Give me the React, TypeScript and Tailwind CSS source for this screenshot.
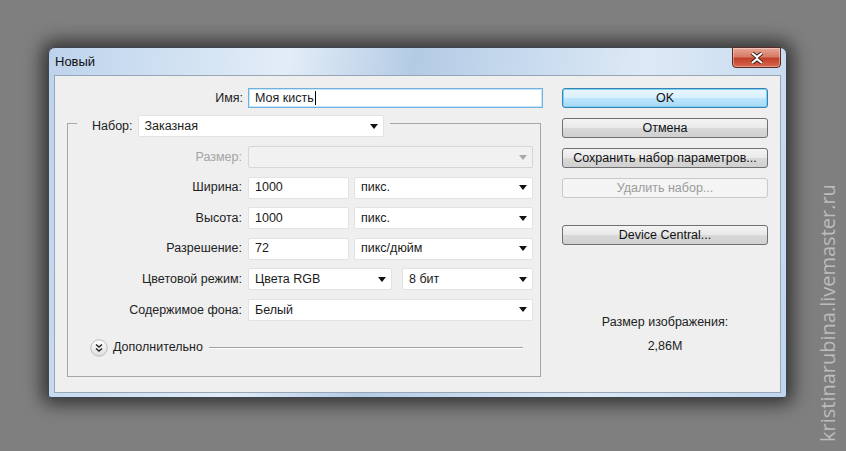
import React from "react";

const font = "font-['Liberation_Sans',Arial,sans-serif]";

function Arrow({ disabled = false }: { disabled?: boolean }) {
  return (
    <svg width="8" height="5" viewBox="0 0 8 5" className="shrink-0">
      <path d="M0 0H8L4 5Z" fill={disabled ? "#a8a8a8" : "#111"} />
    </svg>
  );
}

function Field({ value, w }: { value: string; w: string }) {
  return (
    <div
      className={`${w} flex h-[22px] items-center rounded-[2px] border border-[#e2e2e2] bg-white pl-[6px] text-[#1a1a1a]`}
    >
      {value}
    </div>
  );
}

function Select({
  value,
  w,
  disabled = false,
}: {
  value: string;
  w: string;
  disabled?: boolean;
}) {
  return (
    <div
      className={`${w} flex h-[22px] items-center justify-between rounded-[2px] border pl-[6px] pr-[5px] ${
        disabled
          ? "border-[#d6d6d6] bg-[#f1f1f1]"
          : "border-[#e2e2e2] bg-white text-[#1a1a1a]"
      }`}
    >
      <span>{value}</span>
      <Arrow disabled={disabled} />
    </div>
  );
}

function Row({
  label,
  children,
  muted = false,
  gap = "gap-[5px]",
}: {
  label: string;
  children: React.ReactNode;
  muted?: boolean;
  gap?: string;
}) {
  return (
    <div className="flex h-[22px] items-center">
      <div
        className={`w-[175px] pr-[1px] text-right ${
          muted ? "text-[#a3a3a3]" : "text-[#222]"
        }`}
      >
        {label}
      </div>
      <div className={`ml-[5px] flex ${gap}`}>{children}</div>
    </div>
  );
}

function Button({
  children,
  kind = "normal",
}: {
  children: React.ReactNode;
  kind?: "normal" | "default" | "disabled";
}) {
  const styles = {
    normal:
      "border-[#707070] bg-[linear-gradient(#f3f3f3_0%,#e9e9e9_50%,#d9d9d9_51%,#d0d0d0_100%)] text-[#111]",
    default:
      "border-[#3c7fb1] bg-[linear-gradient(#eaf6fd_0%,#d9f0fc_50%,#bee6fd_51%,#a7d9f5_100%)] text-[#111] shadow-[inset_0_0_0_1px_#7ad2f7]",
    disabled: "border-[#c9c9c9] bg-[#f4f4f4] text-[#9b9b9b]",
  }[kind];
  return (
    <div
      className={`flex h-[20px] w-[206px] items-center justify-center rounded-[3px] border ${styles}`}
    >
      {children}
    </div>
  );
}

export default function App() {
  return (
    <div
      className={`relative h-[451px] w-[846px] overflow-hidden bg-[#7f7f7f] pl-[48px] pt-[47px] text-[12.5px] ${font}`}
    >
      <div className="relative flex h-[351px] w-[739px] flex-col rounded-t-[7px] rounded-b-[3px] border border-[#3f4650] bg-[linear-gradient(100deg,#bdd3ec_0%,#d8e6f4_22%,#e3edf7_30%,#b4cbe5_46%,#cadcef_62%,#dde9f5_75%,#c0d6ee_100%)] shadow-[0_0_18px_6px_rgba(0,0,0,0.6)]">
        <div className="flex h-[27px] items-center pl-[6px] text-[13px] text-[#111]">
          Новый
        </div>
        <div className="absolute -top-[1px] right-[5px] flex h-[21px] w-[49px] items-center justify-center rounded-b-[4px] border border-[#5a2b24] bg-[linear-gradient(#e8a797_0%,#d77c67_45%,#c2402a_55%,#d8684f_100%)] shadow-[inset_0_0_0_1px_rgba(255,255,255,0.35)]">
          <svg width="14" height="12" viewBox="0 0 14 12">
            <path
              d="M2 1L7 5L12 1M2 11L7 7L12 11"
              stroke="#3a1a14"
              strokeWidth="4"
              fill="none"
            />
            <path
              d="M2 1L7 5L12 1M2 11L7 7L12 11"
              stroke="#fff"
              strokeWidth="2.2"
              fill="none"
            />
          </svg>
        </div>

        <div className="mx-[5px] mb-[4px] flex flex-1 border border-[#97a6b6] bg-[#efefef] pl-[12px] pt-[12px]">
          <div className="flex w-[476px] flex-col">
            <div className="flex h-[20px] items-center">
              <div className="w-[176px] text-right text-[#222]">Имя:</div>
              <div className="ml-[5px] flex h-[20px] w-[295px] items-center border border-[#6fb2e0] bg-white pl-[6px] text-[#1a1a1a] shadow-[inset_0_0_0_1px_#c9e6f8]">
                Моя кисть<span className="ml-[1px] inline-block h-[14px] w-[1px] bg-black" />
              </div>
            </div>

            <div className="mt-[7px] w-[474px]">
              <div className="flex h-[22px]">
                <div className="mt-[8px] w-[10px] border-l border-t border-[#a6a6a6]" />
                <div className="flex items-center pl-[15px] pr-[5px] text-[#222]">
                  Набор:
                </div>
                <Select value="Заказная" w="w-[246px]" />
                <div className="ml-[6px] mt-[8px] flex-1 border-r border-t border-[#a6a6a6]" />
              </div>
              <div className="flex h-[240px] flex-col gap-[8.6px] border-b border-l border-r border-[#a6a6a6] pt-[9px]">
                <Row label="Размер:" muted>
                  <Select value="" w="w-[285px]" disabled />
                </Row>
                <Row label="Ширина:">
                  <Field value="1000" w="w-[101px]" />
                  <Select value="пикс." w="w-[179px]" />
                </Row>
                <Row label="Высота:">
                  <Field value="1000" w="w-[101px]" />
                  <Select value="пикс." w="w-[179px]" />
                </Row>
                <Row label="Разрешение:">
                  <Field value="72" w="w-[101px]" />
                  <Select value="пикс/дюйм" w="w-[179px]" />
                </Row>
                <Row label="Цветовой режим:" gap="gap-[10px]">
                  <Select value="Цвета RGB" w="w-[144px]" />
                  <Select value="8 бит" w="w-[131px]" />
                </Row>
                <Row label="Содержимое фона:">
                  <Select value="Белый" w="w-[285px]" />
                </Row>
                <div className="mt-[9px] flex h-[18px] items-center pl-[22px] pr-[17px]">
                  <svg width="18" height="18" viewBox="0 0 18 18">
                    <defs>
                      <linearGradient id="cg" x1="0" y1="0" x2="0" y2="1">
                        <stop offset="0" stopColor="#ffffff" />
                        <stop offset="1" stopColor="#dedede" />
                      </linearGradient>
                    </defs>
                    <circle cx="9" cy="9" r="8.2" fill="url(#cg)" stroke="#b9b9b9" />
                    <path
                      d="M6 5.5L9 8L12 5.5M6 9.5L9 12L12 9.5"
                      stroke="#222"
                      strokeWidth="1.4"
                      fill="none"
                    />
                  </svg>
                  <span className="ml-[5px] text-[#222]">Дополнительно</span>
                  <div className="ml-[6px] h-[2px] flex-1 border-t border-[#a0a0a0] bg-white" />
                </div>
              </div>
            </div>
          </div>

          <div className="ml-[19px] flex flex-col">
            <div className="flex flex-col gap-[10px]">
              <Button kind="default">OK</Button>
              <Button>Отмена</Button>
              <Button>Сохранить набор параметров...</Button>
              <Button kind="disabled">Удалить набор...</Button>
            </div>
            <div className="mt-[27px]">
              <Button>Device Central...</Button>
            </div>
            <div className="mt-[69px] text-center leading-[16px] text-[#222]">
              Размер изображения:
            </div>
            <div className="mt-[8px] text-center leading-[16px] text-[#222]">
              2,86M
            </div>
          </div>
        </div>
      </div>

      <div className="absolute left-[816px] top-[184px] h-[258px] rotate-180 font-['Open_Sans',sans-serif] text-[20px] leading-[24px] text-[#bcbcbc] [writing-mode:vertical-rl]">
        kristinarubina.livemaster.ru
      </div>
    </div>
  );
}
